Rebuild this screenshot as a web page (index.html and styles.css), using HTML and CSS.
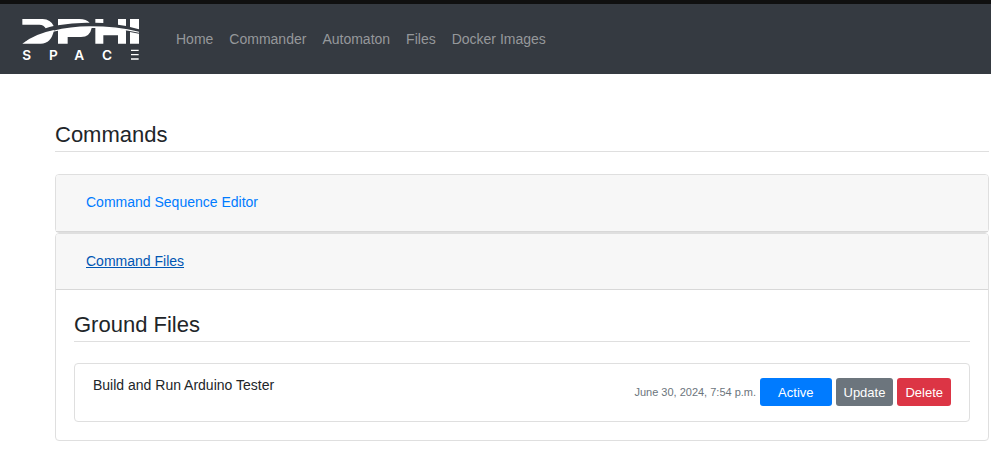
FILE: index.html
```html
<!DOCTYPE html>
<html lang="en">
<head>
<meta charset="utf-8">
<title>DPHI Space - Commands</title>
<link rel="stylesheet" href="styles.css">
</head>
<body>
<header class="navbar">
  <a class="brand" href="#" aria-label="DPHI Space">
    <svg class="brand-logo" viewBox="60 51 366 135" aria-hidden="true">
      <g fill="#fff">
        <path d="M67 57H128Q152 58 161 78Q148 80 137 85Q132 75 118 74H67Z"/>
        <path d="M67 131Q105 101 162 90Q154 131 122 131Z"/>
        <path d="M174 57H238Q260 58 269 68Q220 67 174 76Z"/>
        <path d="M67 131Q150 80 270 79Q350 79 417 95V98Q345 82 275 84Q270 111 243 111H203V131H174V92Q120 100 67 131Z"/>
        <path d="M286 57H310V69L286 68Z"/>
        <path d="M286 82Q350 83 378 91V131H354V106H310V131H286Z"/>
        <path d="M354 57H378V78L354 74Z"/>
        <path d="M390 57H417V88L390 81Z"/>
        <path d="M390 96L417 101V131H390Z"/>
        <path d="M393 149H416V153H393ZM393 162H416V166H393ZM393 175H416V179H393Z"/>
      </g>
      <g class="brand-text">
        <text x="80" y="179">S</text>
        <text x="160" y="179">P</text>
        <text x="238" y="179">A</text>
        <text x="321" y="179">C</text>
      </g>
    </svg>
  </a>
  <nav class="nav-links">
    <a href="#">Home</a>
    <a href="#">Commander</a>
    <a href="#">Automaton</a>
    <a href="#">Files</a>
    <a href="#">Docker Images</a>
  </nav>
</header>
<main class="page">
  <h1 class="title">Commands</h1>
  <section class="card">
    <div class="card-header card-header-collapsed"><a href="#">Command Sequence Editor</a></div>
  </section>
  <section class="card">
    <div class="card-header"><a class="current" href="#">Command Files</a></div>
    <div class="card-body">
      <h2 class="title title-panel">Ground Files</h2>
      <article class="file">
        <span class="file-name">Build and Run Arduino Tester</span>
        <div class="file-actions">
          <small>June 30, 2024, 7:54 p.m.</small>
          <button class="btn btn-active" type="button">Active</button>
          <button class="btn btn-update" type="button">Update</button>
          <button class="btn btn-delete" type="button">Delete</button>
        </div>
      </article>
    </div>
  </section>
</main>
</body>
</html>
```
FILE: styles.css
```css
* {
  box-sizing: border-box;
}

body {
  margin: 0;
  background: #fff;
  color: #212529;
  font: 14px/21px "Liberation Sans", Arial, sans-serif;
}

a {
  color: #007bff;
  text-decoration: none;
}

.navbar {
  display: flex;
  align-items: center;
  padding: 13px 20px 12px;
  border-top: 4px solid #101010;
  background: #353a41;
}

.brand-logo {
  display: block;
  width: 122px;
  height: 45px;
}

.brand-text {
  fill: #fff;
  font-family: Inter, sans-serif;
  font-size: 41px;
  font-weight: 600;
  text-anchor: middle;
}

.nav-links {
  display: flex;
  gap: 16px;
  margin-left: 34px;
}

.nav-links a {
  color: #95989b;
}

.page {
  padding: 48px 2px 13px 55px;
}

.title {
  margin: 0 0 22px;
  padding-bottom: 3px;
  border-bottom: 1px solid #dfdfdf;
  font-size: 22px;
  font-weight: 400;
  line-height: 26px;
}

.title-panel {
  margin-bottom: 21px;
}

.card {
  border: 1px solid #dfdfdf;
  border-radius: 4px;
}

.card-header {
  padding: 17px 30px;
  border-bottom: 1px solid #d8d8d8;
  border-radius: 3px 3px 0 0;
  background: #f7f7f7;
}

.card-header-collapsed {
  padding-bottom: 18px;
}

.card-header .current {
  color: #0056b3;
  text-decoration: underline;
}

.card-body {
  padding: 22px 18px 18px;
}

.file {
  display: flex;
  align-items: flex-start;
  justify-content: space-between;
  padding: 11px 18px 15px;
  border: 1px solid #dfdfdf;
  border-radius: 4px;
}

.file-actions {
  display: flex;
  align-items: center;
  gap: 4px;
  padding-top: 3px;
}

.file-actions small {
  color: #6c757d;
  font-size: 11px;
}

.btn {
  height: 28px;
  padding: 0 8px;
  border: 0;
  border-radius: 3px;
  color: #fff;
  font: inherit;
  font-size: 13px;
}

.btn-active {
  padding: 0 18px;
  background: #007bff;
}

.btn-update {
  background: #6c757d;
}

.btn-delete {
  background: #dc3545;
}
```
